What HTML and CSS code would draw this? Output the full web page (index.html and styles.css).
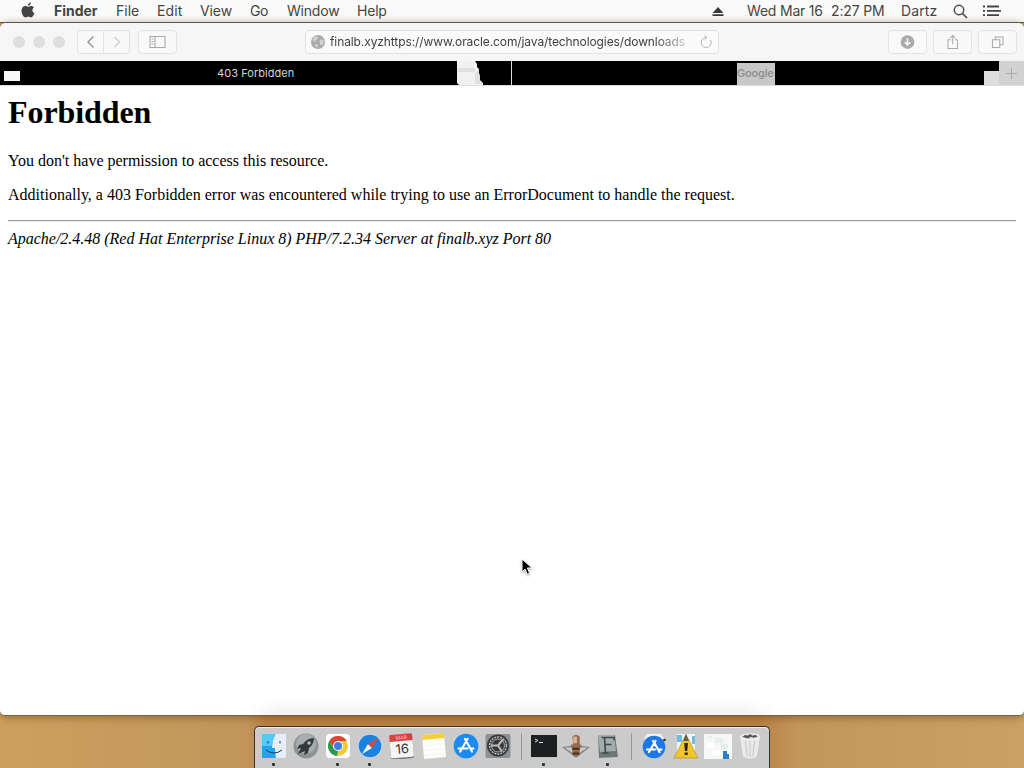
FILE: index.html
```html
<!DOCTYPE html>
<html lang="en">
<head>
<meta charset="utf-8">
<title>403 Forbidden</title>
<link rel="stylesheet" href="styles.css">
</head>
<body>
<header class="menubar">
  <svg class="apple" viewBox="0 0 14 17"><path d="M9.8 0.6C9.9 2.2 8.6 3.8 7 3.8C6.9 2.3 8.2 0.8 9.8 .6ZM7.1 4.7C7.8 4.7 8.7 3.9 10.1 3.9C11.3 3.9 12.4 4.5 13 5.4C10.7 6.8 11 10.1 13.5 11.1C12.8 13 11.6 15.4 10.1 15.4C9 15.4 8.6 14.8 7.3 14.8C6 14.8 5.5 15.4 4.5 15.4C2.7 15.4.5 11.8.5 8.7C.5 5.7 2.3 4 4.2 4C5.5 4 6.4 4.7 7.1 4.7Z"/></svg>
  <nav class="menus">
    <b class="m-finder">Finder</b><span class="m-file">File</span><span class="m-edit">Edit</span><span class="m-view">View</span><span class="m-go">Go</span><span class="m-window">Window</span><span class="m-help">Help</span>
  </nav>
  <svg class="eject" viewBox="0 0 12 11"><path d="M6 1L11.5 7H.5ZM.5 8.3h11v1.8H.5z"/></svg>
  <span class="date">Wed Mar 16</span><span class="time">2:27 PM</span><span class="user">Dartz</span>
  <svg class="search" viewBox="0 0 15 15"><circle cx="6" cy="6" r="4.7"/><path d="M9.4 9.4L14 14"/></svg>
  <svg class="list" viewBox="0 0 18 12"><path d="M0 1.5h2M0 5.8h2M0 10.2h2M4 1.5h12M4 5.8h14M4 10.2h12"/></svg>
</header>

<div class="desktop">
<main class="window">
  <div class="toolbar">
    <i class="light"></i><i class="light"></i><i class="light"></i>
    <div class="btn back"><svg viewBox="0 0 24 22"><path d="M15 5.5L9.5 11l5.5 5.5"/></svg></div>
    <div class="btn fwd"><svg viewBox="0 0 24 22"><path d="M10 6l5 5-5 5"/></svg></div>
    <div class="btn side"><svg viewBox="0 0 36 22"><path d="M10.5 5.5h15v11h-15zM15.5 5.5v11M12 8h2M12 10.5h2M12 13h2"/></svg></div>
    <div class="address">
      <svg class="globe" viewBox="0 0 14 14"><circle cx="7" cy="7" r="7"/><path d="M1.500 4l3-2.500 2.500.5-.5 2-2 1 .5 2-2-.5zM8.500 6l2-2 2.500 2-1.500 4-2 0zM4 9l3 .5-.5 3-2-1z"/></svg>
      <span class="url">finalb.xyzhttps://www.oracle.com/java/technologies/downloads</span>
      <svg class="reload" viewBox="0 0 14 14"><path d="M7.500 2.500A5 5 0 1 0 11.500 5M5.500 .3L7.900 2.500 5.500 4.800"/></svg>
    </div>
    <div class="btn tool down"><svg viewBox="0 0 38 24"><circle cx="19" cy="12" r="7.500"/><path d="M19 8v7M16 12.200l3 3 3-3"/></svg></div>
    <div class="btn tool"><svg viewBox="0 0 38 24"><path d="M17 9.500h-3v9.500h10.500v-9.500h-3M19.200 14.500V5M16.400 7.800L19.200 5 22 7.800"/></svg></div>
    <div class="btn tool"><svg viewBox="0 0 38 24"><path d="M13.500 9.500h8v8.500h-8zM16.500 9.500v-3h8.500v8.500h-3.500"/></svg></div>
  </div>

  <div class="tabs">
    <div class="tab first"><i class="close"></i><span>403 Forbidden</span>
      <svg class="torn" viewBox="0 0 26 24"><path fill="#f1f1f1" d="M0 0h18l2 3v3l2 2v4l1 3v4l3 3v2H2l-2-2z"/><path fill="#d6d6d6" d="M1 7h17v4H1zM18 12l4-4v4l1 4v4l3 3h-8z" opacity=".6"/></svg>
    </div>
    <div class="tab second"><span>Google</span><i class="patch"></i></div>
    <div class="plus"><svg viewBox="0 0 25 24"><path d="M12.500 7v11M7 12.500h11"/></svg></div>
  </div>

  <section class="page">
    <h1>Forbidden</h1>
    <p>You don't have permission to access this resource.</p>
    <p>Additionally, a 403 Forbidden error was encountered while trying to use an ErrorDocument to handle the request.</p>
    <hr>
    <address>Apache/2.4.48 (Red Hat Enterprise Linux 8) PHP/7.2.34 Server at finalb.xyz Port 80</address>
  </section>
  <div class="haze"></div>
</main>

<footer class="dock">
  <div class="app on"><svg viewBox="0 0 26 26"><path fill="#23a5ee" d="M1 1h24v24H1z"/><path fill="#55c8fa" d="M1 1h13l-3 12H1z"/><path fill="#e6eff7" d="M14.500 1H25v24H15q-1-5-1-10h-3q0-7 3.500-14z"/><path fill="none" stroke="#173a5c" d="M7 8v2.500M19 8v2.500M5 17q8 6 16 0"/></svg></div>
  <div class="app"><svg viewBox="0 0 26 26"><circle cx="13" cy="13" r="12.500" fill="#8b9395"/><circle cx="13" cy="11" r="10" fill="#a7aeb0"/><path fill="#34393b" d="M21 5q-7 0-11 6l-4 1-2 4 4-1-3 6 7-3-1 4 4-2 1-5q5-4 5-10z"/><circle cx="16" cy="10" r="1.700" fill="#b7c1c4"/></svg></div>
  <div class="app on"><svg viewBox="0 0 26 26"><rect x="1" y="1" width="24" height="24" rx="4" fill="#fff"/><circle cx="13" cy="13" r="10" fill="#f7c933"/><path fill="#db4538" d="M4.300 8A10 10 0 0 1 21.700 8H13L8.700 15.500z"/><path fill="#279b55" d="M4.300 8L8.700 15.500l4.300 2.500L12 23A10 10 0 0 1 4.300 8z"/><circle cx="13" cy="13" r="5" fill="#fff"/><circle cx="13" cy="13" r="4" fill="#3f7fe8"/></svg></div>
  <div class="app on"><svg viewBox="0 0 26 26"><circle cx="13" cy="13" r="12.300" fill="#c9d8e4"/><circle cx="13" cy="13" r="11.300" fill="#1c82e0"/><path fill="#f4f4f4" d="M5 21l6-10 4 4z"/><path fill="#e0453d" d="M21.500 4.500L11 11l4 4z"/></svg></div>
  <div class="app"><svg viewBox="0 0 26 26"><g transform="rotate(-5 13 13)"><rect x="1" y="1" width="23" height="25" rx="1.500" fill="#777"/><rect x="1" y="1" width="23" height="23.500" rx="1.500" fill="#f5f5f5"/><path fill="#d94242" d="M1 2.500Q1 1 2.500 1h20Q24 1 24 2.500V8H1z"/><text x="13" y="6.500" class="mar">MAR</text><text x="13" y="20.500" class="day">16</text></g></svg></div>
  <div class="app"><svg viewBox="0 0 26 26"><g transform="rotate(-5 13 13)"><path fill="#fdfdf9" d="M2 1h22v24H2z"/><path fill="#f6cf3a" d="M2 1h22v5H2z"/><path stroke="#e9e9e6" d="M2 11.500h22M2 16.500h22M2 21.500h22" stroke-width=".4"/></g></svg></div>
  <div class="app"><svg viewBox="0 0 26 26"><circle cx="13" cy="13" r="12.300" fill="#1c8bf0"/><path class="store" d="M12 6l2 3.500 5 9M14.500 6l-7.300 12.500M5.500 15.500h9M17.500 15.500h3"/></svg></div>
  <div class="app"><svg viewBox="0 0 26 26"><rect x=".5" y="1" width="25" height="24" rx="2" fill="#8d9194"/><circle cx="13" cy="12.500" r="11" fill="#36383a"/><circle cx="13" cy="12.500" r="8.500" fill="none" stroke="#b8b8b8" stroke-width="1.500" stroke-dasharray="2 1"/><circle cx="13" cy="12.500" r="6.500" fill="none" stroke="#aaa"/><path fill="none" stroke="#bcbcbc" stroke-width="2" d="M13 12.500H5.500M13 12.500l5-6M13 12.500l4 6"/></svg></div>
  <i class="sep"></i>
  <div class="app on"><svg viewBox="0 0 26 26"><rect x="0" y="2" width="26" height="22.500" fill="#b9b9b9"/><path fill="#1d2021" d="M0 2h26v22H0z"/><path d="M4 6l3 1.500L4 9M8 9.500h4" stroke="#ddd" fill="none"/></svg></div>
  <div class="app"><svg viewBox="-2 0 30 26"><path fill="#858585" d="M-2 14l9-1h12l9 1-14 11q-1 1-2 0z"/><path fill="#c9c9c9" d="M1 14.500h24l-12 9z"/><path fill="#9a6a4c" d="M9 3q4-4 8 0v8l2 1-2 4v6q-4 4-8 0v-6l-2-4 3-1z"/><path fill="#d6b793" d="M10 3h4v7h-4z"/><path fill="#3c3028" d="M9 15h8v2H9zM9.500 20h7v2h-7z"/></svg></div>
  <div class="app on"><svg viewBox="0 0 26 26"><path fill="#6e7778" d="M3 3l17-1 3 22-19 1z"/><path fill="#a3acac" d="M3 2h16l2 16-16 1z"/><path fill="none" stroke="#404849" stroke-width="1.600" d="M10.500 20L9.500 4.500H19V7.500M9.500 11.500H16.500M7.500 20h6M6.500 4.500h4"/></svg></div>
  <i class="sep"></i>
  <div class="app"><svg viewBox="0 0 26 26"><path fill="#f1f3ec" d="M6 1h14l3 5H3z"/><circle cx="13" cy="14" r="11.300" fill="#1c78e8"/><path class="store" d="M12 8l2 3 4.500 8M14.500 8L8 19M6 16.500h8M17.500 16.500h3"/><circle cx="23.500" cy="7" r="1.300" fill="#333"/></svg></div>
  <div class="app"><svg viewBox="0 0 26 26"><path fill="#edf5f8" d="M4 1h18v19H4z"/><path fill="#6fbbe7" d="M4 2h5v7H4zM19 3h3v8h-3z"/><path fill="#f2c52c" stroke="#a78a32" stroke-width=".6" d="M13 1.500L25 25H1z"/><path fill="#655e45" d="M13 1l3 7h-6z"/><path fill="#29261d" d="M11.200 10h3.800l-.7 8h-2.400zM11.700 19.500h3V22h-3z"/></svg></div>
  <div class="app"><svg viewBox="0 0 28 26"><path fill="#f6f7f7" d="M0 1h28v25H0z"/><path fill="#e4edf0" d="M4 3h4v2H4zM11 5h8v5h-8zM17 11h7v5h-7z"/><path fill="#fff" d="M2 9h8v6H2zM8 17h8v5H8z"/><path fill="#2a80c8" d="M19 18h4v3h2v5h-6z"/></svg></div>
  <div class="app"><svg viewBox="0 0 26 28"><path fill="#e9e9e9" stroke="#f4f4f4" stroke-width=".8" d="M3 4l3 21q7 4 14 0l3-21z"/><path stroke="#c4c4c4" d="M8 8l2 17M13 8v18M18 8l-2 17" fill="none"/><ellipse cx="13" cy="4" rx="10.500" ry="3" fill="#ddd" stroke="#f7f7f7"/><path fill="#555" d="M5 4l3-2 2 1 3-2 3 2 3-1 2 2-4 1-3-1-3 2-3-1z"/></svg></div>
</footer>
</div>
<svg class="cursor" viewBox="0 0 12 18"><path d="M1 1v13l3-3 2.300 5.300 2.400-1L6.400 10H11z"/></svg>
</body>
</html>
```
FILE: styles.css
```css
* { box-sizing: border-box; }
html, body { height: 100%; }
body { margin: 0; height: 768px; overflow: hidden; display: flex; flex-direction: column; font-family: Inter, "Liberation Sans", sans-serif; background: #c69a5c; }
svg { display: block; flex: none; }

.menubar { height: 23px; flex: none; display: flex; align-items: center; background: #fafafa; border-bottom: 1px solid #5c5c5c; color: #444; font-size: 14px; line-height: 22px; white-space: nowrap; }
.apple { width: 14px; height: 17px; margin: -1px 19px 0 21px; fill: #444; }
.menus { display: flex; width: 658px; }
.menus b { font-weight: 700; }
.m-finder { width: 62px; letter-spacing: -.02px; }
.m-file { width: 41px; }
.m-edit { width: 43px; letter-spacing: .1px; }
.m-view { width: 50px; letter-spacing: -.1px; }
.m-go { width: 37px; letter-spacing: -.4px; }
.m-window { width: 70px; letter-spacing: -.2px; }
.m-help { letter-spacing: -.2px; }
.eject { width: 12px; height: 11px; fill: #3b3b3b; }
.date { width: 84px; margin-left: 23px; letter-spacing: -.2px; }
.time { width: 70px; letter-spacing: -.15px; }
.user { width: 52px; letter-spacing: .1px; }
.search { width: 15px; height: 15px; fill: none; stroke: #4a4a4a; stroke-width: 1.500; }
.list { width: 18px; height: 12px; margin-left: 15px; stroke: #444; stroke-width: 1.800; }

.desktop { flex: 1; display: flex; flex-direction: column; align-items: center; background: linear-gradient(90deg, #cda05d 0, #c2955c 24%, #b98145 26%, #b98145 74%, #c3965c 78%, #cca066 100%); }
.window { width: 1024px; height: 693px; flex: none; display: flex; flex-direction: column; background: #fff; border-radius: 6px 6px 5px 5px; border-bottom: 1px solid #776044; box-shadow: 0 1px 9px rgba(80, 50, 10, .5); overflow: hidden; }
.toolbar { height: 38px; flex: none; display: flex; align-items: center; background: #f6f6f6; padding: 0 7px 0 13px; }
.light { width: 12px; height: 12px; border-radius: 50%; background: #dedede; margin-right: 8px; }
.btn { height: 24px; border: 1px solid #e3e3e3; border-radius: 4px; background: #f9f9f9; }
.btn svg { width: 100%; height: 100%; fill: none; stroke: #aaa; stroke-width: 1.100; }
.back { width: 27px; margin-left: 4px; border-radius: 4px 0 0 4px; }
.back svg { stroke: #8d8d8d; stroke-width: 1.300; }
.fwd { width: 26px; border-left: 0; border-radius: 0 4px 4px 0; }
.fwd svg { stroke: #ccc; stroke-width: 1.300; }
.side { width: 39px; margin-left: 8px; }
.address { width: 414px; height: 24px; margin: 0 169px 0 128px; flex: none; padding-left: 5px; display: flex; align-items: center; border: 1px solid #e1e1e1; border-radius: 4px; background: #fafafa; }
.globe { width: 14px; height: 14px; fill: #aaa; }
.globe path { fill: #d4d4d4; }
.url { width: 357px; margin-left: 5px; white-space: nowrap; font-size: 12px; letter-spacing: -.1px; line-height: 24px; color: #414141; -webkit-mask-image: linear-gradient(90deg, #000 91%, rgba(0,0,0,.2)); mask-image: linear-gradient(90deg, #000 91%, rgba(0,0,0,.2)); }
.reload { width: 14px; height: 14px; margin-left: 12px; fill: none; stroke: #b4b4b4; stroke-width: 1; }
.tool { width: 39px; margin-right: 6px; flex: none; }
.tool:last-child { margin-right: 0; }
.down circle { fill: #aaa; stroke: none; }
.down path { stroke: #fff; stroke-width: 1.600; }

.tabs { height: 24px; flex: none; display: flex; background: #000; font-size: 11px; line-height: 24px; }
.tab { display: flex; }
.first { width: 512px; border-right: 1px solid #ddd; color: #d5d5d5; }
.close { width: 16px; height: 10px; margin: 10px 197px 0 4px; background: #f8f8f8; }
.first span { width: 240px; letter-spacing: .05px; }
.torn { width: 26px; height: 24px; }
.second { width: 487px; padding-left: 225px; }
.second span { width: 38px; height: 22px; margin-top: 2px; line-height: 21px; background: #c8c8c8; color: #8c8c8c; font-weight: 500; letter-spacing: -.15px; }
.patch { width: 15px; height: 14px; margin: 10px 0 0 auto; background: #dcdcdc; }
.plus { width: 25px; background: #d2d2d2; }
.plus svg { width: 25px; height: 24px; stroke: #aaa; }

.page { flex: 1; padding: 8px 8px; font-family: "Liberation Serif", serif; font-size: 16px; line-height: 18px; color: #000; border-top: 1px solid #ddd; }
.page h1 { margin: 0 0 22px; font-size: 32px; line-height: 36px; letter-spacing: -.08px; }
.page p { margin: 0 0 16px; }
.page hr { height: 2px; margin: 0 0 8px; border: 0; border-top: 1px solid #9a9a9a; border-bottom: 1px solid #ececec; }
.page address { font-style: italic; letter-spacing: -.01px; }
.haze { width: 530px; height: 16px; margin: 0 auto; flex: none; background: linear-gradient(#fff, #f1f1f1); -webkit-mask-image: linear-gradient(90deg, transparent, #000 6%, #000 94%, transparent); mask-image: linear-gradient(90deg, transparent, #000 6%, #000 94%, transparent); }

.dock { width: 516px; height: 42px; margin-top: 10px; flex: none; display: flex; padding-left: 3px; border: 1px solid #34302a; border-bottom: 0; border-radius: 5px 5px 0 0; background: #cbcbcb; box-shadow: inset 0 1px #eee; }
.app { width: 32px; height: 41px; flex: none; display: flex; flex-direction: column; align-items: center; padding-top: 6px; }
.app svg { width: 28px; height: 26px; }
.on::after { content: ""; width: 3px; height: 3px; margin: 4px 1px 0 0; border-radius: 1px; background: #333; }
.sep { width: 1px; height: 27px; flex: none; margin: 6px 6px 0 7px; background: #999; }
.store { fill: none; stroke: #fff; stroke-width: 2.200; stroke-linecap: round; }
.mar, .day { font-family: Inter, sans-serif; text-anchor: middle; }
.mar { font-size: 5px; fill: #f5c5c5; }
.day { font-size: 13px; fill: #333; }
.cursor { position: absolute; left: 521px; top: 558px; width: 12px; height: 18px; fill: #000; stroke: #fff; stroke-width: 1; filter: drop-shadow(0 1px 1px rgba(0,0,0,.35)); }
```
